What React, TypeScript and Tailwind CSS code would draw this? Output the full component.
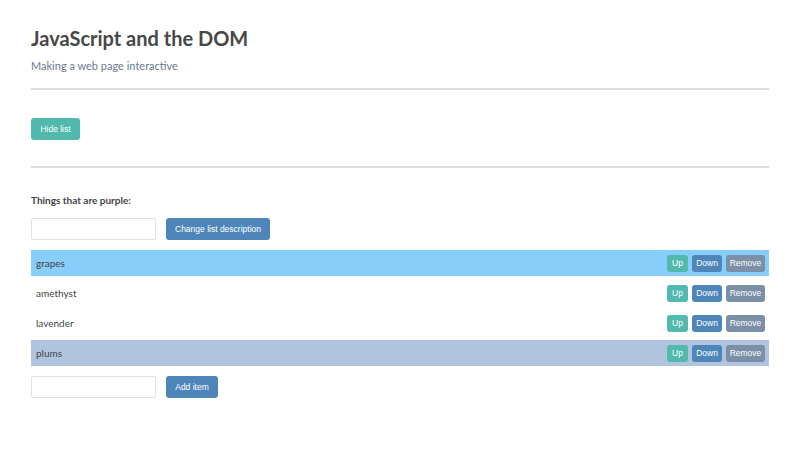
import React from "react";

const ITEMS: { name: string; bg: string }[] = [
  { name: "grapes", bg: "bg-[#87cefa]" },
  { name: "amethyst", bg: "bg-white" },
  { name: "lavender", bg: "bg-white" },
  { name: "plums", bg: "bg-[#b0c4de]" },
];

const btn = "rounded-[3px] text-white font-['Liberation_Sans',Arial,sans-serif]";

export default function App() {
  return (
    <div className="w-[800px] h-[450px] bg-white px-[31px] pt-[26px] font-['Lato',sans-serif] text-[#484848]">
      {/* Header */}
      <h1 className="text-[20px] font-bold leading-[24px] text-[#474747]">JavaScript and the DOM</h1>
      <p className="mt-[9px] text-[11px] leading-[14px] text-[#6b7a88]">Making a web page interactive</p>
      <hr className="mt-[15px] border-0 h-[2px] bg-[#dddddd]" />

      <button className={`${btn} mt-[28px] h-[22px] w-[49px] bg-[#52b9ae] text-[8.5px]`}>Hide list</button>
      <hr className="mt-[26px] border-0 h-[2px] bg-[#dddddd]" />

      {/* List */}
      <p className="mt-[25px] text-[10px] font-bold leading-[14px] text-[#444]">Things that are purple:</p>
      <div className="mt-[11px] flex gap-[10px]">
        <input className="h-[22px] w-[125px] rounded-[2px] border border-[#e3e3e3] outline-none" />
        <button className={`${btn} h-[22px] w-[104px] bg-[#4e86b9] text-[8.5px]`}>Change list description</button>
      </div>

      <ul className="mt-[10px] flex flex-col gap-[4px]">
        {ITEMS.map((it) => (
          <li key={it.name} className={`${it.bg} h-[26px] flex items-center pl-[5px] pr-[4px]`}>
            <span className="flex-1 text-[10px] text-[#444]">{it.name}</span>
            <div className="flex gap-[4px]">
              <button className={`${btn} h-[17px] w-[21px] bg-[#52b9ae] text-[8.5px]`}>Up</button>
              <button className={`${btn} h-[17px] w-[30px] bg-[#4e86b9] text-[8.5px]`}>Down</button>
              <button className={`${btn} h-[17px] w-[39px] bg-[#7b8fa6] text-[8.5px]`}>Remove</button>
            </div>
          </li>
        ))}
      </ul>

      <div className="mt-[10px] flex gap-[10px]">
        <input className="h-[22px] w-[125px] rounded-[2px] border border-[#e3e3e3] outline-none" />
        <button className={`${btn} h-[22px] w-[52px] bg-[#4e86b9] text-[8.5px]`}>Add item</button>
      </div>
    </div>
  );
}
